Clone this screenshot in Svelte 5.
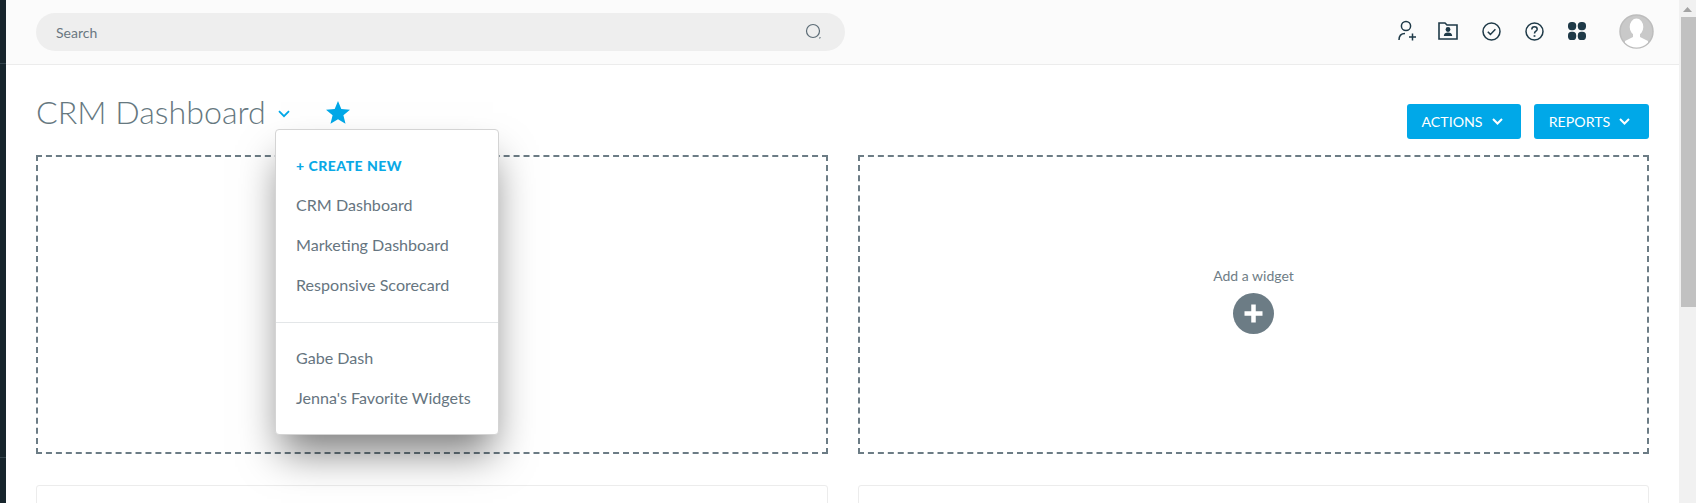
<script>
  const created = ['CRM Dashboard', 'Marketing Dashboard', 'Responsive Scorecard'];
  const shared = ['Gabe Dash', "Jenna's Favorite Widgets"];
</script>

<div class="page">
  <aside class="rail"><i class="l1"></i><i class="l2"></i></aside>
  <div class="main">
    <header class="topbar">
      <div class="search">
        <span>Search</span>
        <svg width="18" height="18" viewBox="0 0 18 18" fill="none" stroke="#5b6b75" stroke-width="1.2"><circle cx="8" cy="8" r="6.5"/><path d="M14.5 14.5l.8.8" stroke-width="1.6"/></svg>
      </div>
      <nav class="icons">
        <svg class="i1" width="20" height="22" viewBox="0 0 20 22" fill="none" stroke="#1f3a48" stroke-width="1.5"><circle cx="8" cy="6" r="4.6"/><path d="M1 20c0-4.5 2.5-6.5 6-6.5"/><path d="M11 17h7M14.5 13.5v7"/></svg>
        <svg class="i2" width="20" height="18" viewBox="0 0 20 18" fill="none"><path d="M1 1h6l2 2h10v14H1z" stroke="#1f3a48" stroke-width="1.6"/><circle cx="10" cy="7.5" r="2.4" fill="#1f3a48"/><path d="M5.8 14c0-2.6 1.8-3.6 4.2-3.6s4.2 1 4.2 3.6z" fill="#1f3a48"/></svg>
        <svg class="i3" width="19" height="19" viewBox="0 0 19 19" fill="none" stroke="#1f3a48" stroke-width="1.5"><circle cx="9.5" cy="9.5" r="8.5"/><path d="M5.8 9.8l2.6 2.6 5-5.2"/></svg>
        <svg class="i4" width="19" height="19" viewBox="0 0 19 19" fill="none" stroke="#1f3a48" stroke-width="1.5"><circle cx="9.5" cy="9.5" r="8.5"/><path d="M6.8 7.4c0-1.6 1.2-2.6 2.7-2.6s2.7 1 2.7 2.4c0 2-2.7 2-2.7 4.2"/><path d="M9.5 13.2v1.6" stroke-width="1.8"/></svg>
        <svg class="i5" width="18" height="18" viewBox="0 0 18 18" fill="#1f3a48"><rect x="0" y="0" width="8.2" height="8.2" rx="3.6"/><rect x="9.8" y="0" width="8.2" height="8.2" rx="3.6"/><rect x="0" y="9.8" width="8.2" height="8.2" rx="3.6"/><rect x="9.8" y="9.8" width="8.2" height="8.2" rx="3.6"/></svg>
        <svg class="avatar" width="35" height="35" viewBox="0 0 35 35"><defs><clipPath id="av"><circle cx="17.5" cy="17.5" r="16"/></clipPath></defs><circle cx="17.5" cy="17.5" r="16.5" fill="#c9c9c9" stroke="#bdbdbd" stroke-width="1.5"/><g clip-path="url(#av)" fill="#fff"><ellipse cx="17.5" cy="13" rx="6.8" ry="8.5"/><path d="M14 19h7v4l8 4v8H6v-8l8-4z"/></g></svg>
      </nav>
    </header>

    <section class="content">
      <div class="heading">
        <h1>CRM Dashboard</h1>
        <svg class="chev" width="12" height="8" viewBox="0 0 12 8" fill="none" stroke="#00a8e8" stroke-width="1.8"><path d="M1 1.2l5 5 5-5"/></svg>
        <svg class="star" width="24" height="23" viewBox="0 0 24 23" fill="#00a8e8"><path d="M12 0l3.3 8 8.7.7-6.6 5.600 2.100 8.500L12 18.200 4.500 22.800l2.100-8.500L0 8.700 8.700 8z"/></svg>
        <div class="actions">
          <button>ACTIONS <svg width="11" height="7" viewBox="0 0 11 7" fill="none" stroke="#fff" stroke-width="2"><path d="M1 1l4.500 4.500L10 1"/></svg></button>
          <button>REPORTS <svg width="11" height="7" viewBox="0 0 11 7" fill="none" stroke="#fff" stroke-width="2"><path d="M1 1l4.500 4.500L10 1"/></svg></button>
        </div>
        <div class="menu">
          <div class="group first">
            <a class="create" href="#new">+ CREATE NEW</a>
            {#each created as item}<a href="#d">{item}</a>{/each}
          </div>
          <div class="group second">
            {#each shared as item}<a href="#s">{item}</a>{/each}
          </div>
        </div>
      </div>

      <div class="grid">
        <div class="slot"></div>
        <div class="slot">
          <span>Add a widget</span>
          <svg width="41" height="41" viewBox="0 0 41 41"><circle cx="20.5" cy="20.5" r="20.5" fill="#6c7c85"/><path d="M20.5 11.5v18M11.5 20.5h18" stroke="#fff" stroke-width="4.5"/></svg>
        </div>
        <div class="card"></div>
        <div class="card"></div>
      </div>
    </section>
  </div>
  <div class="scrollbar">
    <svg width="9" height="5" viewBox="0 0 9 5" fill="#a3a3a3"><path d="M4.5 0L9 5H0z"/></svg>
    <div class="thumb"></div>
  </div>
</div>

<style>
  :global(body) { margin: 0; background: #fff; overflow: hidden; }
  .page { display: flex; height: 503px; overflow: hidden; font-family: Lato, "Open Sans", sans-serif; color: #5f6f7a; }
  .rail { position: relative; width: 6px; flex: none; background: #17252c; }
  .rail i { position: absolute; left: 0; right: 0; height: 1px; background: #34444c; }
  .l1 { top: 63px; }
  .l2 { top: 457px; }
  .main { flex: 1; min-width: 0; }
  .topbar { height: 64px; display: flex; align-items: flex-start; padding-left: 30px; background: #fbfbfb; border-bottom: 1px solid #ececec; }
  .search { margin-top: 13px; width: 809px; height: 38px; box-sizing: border-box; padding: 0 22px 0 20px; display: flex; align-items: center; justify-content: space-between; border-radius: 19px; background: #eee; font-size: 14px; color: #6a7781; }
  .icons { display: flex; align-items: center; margin-left: 553px; height: 62px; }
  .i2 { margin-left: 20px; }
  .i3 { margin-left: 24px; }
  .i4 { margin-left: 24px; }
  .i5 { margin-left: 24px; }
  .avatar { margin-left: 33px; }
  .content { padding: 0 0 0 30px; width: 1643px; box-sizing: border-box; }
  .heading { position: relative; height: 90px; display: flex; align-items: flex-start; }
  h1 { margin: 25px 0 0; font-weight: 300; font-size: 32.2px; line-height: 44px; color: #66787f; white-space: nowrap; }
  .chev { margin: 45px 0 0 12px; }
  .star { margin: 36px 0 0 36px; }
  .actions { margin-left: auto; margin-top: 39px; display: flex; gap: 13px; }
  .actions button { height: 35px; width: 114px; display: flex; align-items: center; justify-content: center; gap: 9px; border: 0; border-radius: 3px; background: #00a8e8; color: #fff; font: 400 14.2px Lato, sans-serif; padding: 0 4px 0 0; }
  .actions button:last-child { width: 115px; }
  .menu { position: absolute; left: 239px; top: 64px; width: 224px; height: 306px; box-sizing: border-box; background: #fff; border: 1px solid #d4d4d4; border-radius: 4px; box-shadow: 0 24px 38px -6px rgba(0,0,0,.5); z-index: 2; }
  .group { display: flex; flex-direction: column; }
  .first { border-bottom: 1px solid #e3e6e8; padding: 15px 0 17px 20px; }
  .second { padding: 15px 0 18px 20px; }
  .group a { height: 40px; line-height: 40px; font-size: 16.1px; color: #66757f; text-decoration: none; white-space: nowrap; }
  .group .create { font-weight: 900; font-size: 14px; letter-spacing: .5px; color: #0aa9e6; line-height: 41px; }
  .grid { display: grid; grid-template-columns: 792px 791px; column-gap: 30px; row-gap: 31px; }
  .slot { height: 299px; box-sizing: border-box; border: 2px dashed #6c7c85; display: flex; flex-direction: column; align-items: center; justify-content: center; gap: 9px; padding-bottom: 13px; }
  .slot span { font-size: 14px; color: #6f7d86; margin-top: 4px; }
  .card { height: 100px; box-sizing: border-box; border: 1px solid #ececec; border-radius: 3px; }
  .scrollbar { width: 17px; flex: none; background: #f1f1f1; display: flex; flex-direction: column; align-items: center; padding-top: 7px; box-sizing: border-box; }
  .thumb { margin-top: 5px; width: 15px; margin-left: 2px; height: 290px; background: #c1c1c1; }
</style>
